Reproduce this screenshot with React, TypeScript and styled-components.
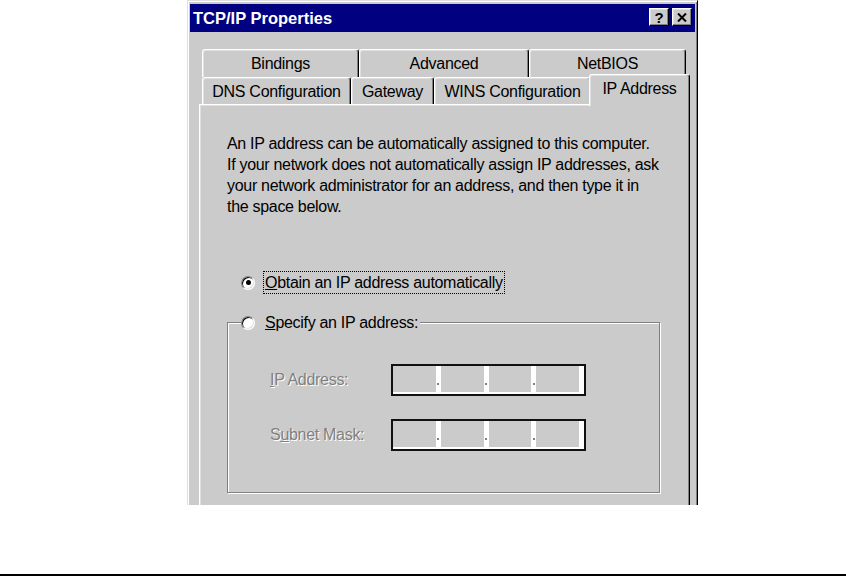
import styled, { createGlobalStyle } from 'styled-components'

const FACE = '#cbcbcb'

const GlobalStyle = createGlobalStyle`
  html, body {
    margin: 0;
    padding: 0;
    background: #fff;
  }
  body {
    font-family: "Liberation Sans", Arial, sans-serif;
    font-size: 16px;
    letter-spacing: -0.3px;
    color: #000;
  }
`

function IpBox() {
	return (
		<IpInput>
			<Octet />
			<Sep>
				<Dot />
			</Sep>
			<Octet />
			<Sep>
				<Dot />
			</Sep>
			<Octet />
			<Sep>
				<Dot />
			</Sep>
			<Octet />
		</IpInput>
	)
}

function App() {
	return (
		<>
			<GlobalStyle />
			<Page>
				<Dialog>
					<TitleBar>
						<Title>TCP/IP Properties</Title>
						<Caption>
							<CapButton>?</CapButton>
							<CapButton>
								<svg width="10" height="9" viewBox="0 0 10 9">
									<path d="M1 0.5 L9 8.5 M9 0.5 L1 8.5" stroke="#000" strokeWidth="2" />
								</svg>
							</CapButton>
						</Caption>
					</TitleBar>

					<Body>
						<TabRow>
							<Tab $w={157}>Bindings</Tab>
							<Tab $w={170}>Advanced</Tab>
							<Tab $w={157}>NetBIOS</Tab>
						</TabRow>
						<FrontRow>
							<Tab $w={149}>DNS Configuration</Tab>
							<Tab $w={83}>Gateway</Tab>
							<Tab $w={157}>WINS Configuration</Tab>
							<ActiveTab>IP Address</ActiveTab>
						</FrontRow>

						<Panel>
							<Intro>
								An IP address can be automatically assigned to this computer.
								<br />
								If your network does not automatically assign IP addresses, ask
								<br />
								your network administrator for an address, and then type it in
								<br />
								the space below.
							</Intro>

							<Option>
								<Radio $checked />
								<FocusLabel>
									<U>O</U>btain an IP address automatically
								</FocusLabel>
							</Option>

							<Group>
								<Legend>
									<Radio />
									<Label>
										<U>S</U>pecify an IP address:
									</Label>
								</Legend>
								<Fields>
									<FieldRow>
										<Disabled>
											<U>I</U>P Address:
										</Disabled>
										<IpBox />
									</FieldRow>
									<FieldRow>
										<Disabled>
											S<U>u</U>bnet Mask:
										</Disabled>
										<IpBox />
									</FieldRow>
								</Fields>
							</Group>
						</Panel>
					</Body>
				</Dialog>
				<Rule />
			</Page>
		</>
	)
}
export default App

const Page = styled.div`
	width: 846px;
	height: 576px;
	display: flex;
	flex-direction: column;
	overflow: hidden;
`

const Dialog = styled.div`
	margin-left: 187px;
	width: 511px;
	height: 505px;
	box-sizing: border-box;
	background: ${FACE};
	border: 1px solid;
	border-color: #dfdfdf #000 transparent #dfdfdf;
	border-bottom: none;
	box-shadow: inset 1px 1px 0 #fff, inset -1px 0 0 #808080;
	padding: 3px 2px 0 2px;
	display: flex;
	flex-direction: column;
	overflow: hidden;
`

const TitleBar = styled.div`
	height: 28px;
	flex-shrink: 0;
	background: #000080;
	display: flex;
	align-items: center;
	justify-content: space-between;
	padding: 0 3px 0 3px;
`

const Title = styled.div`
	color: #fff;
	font-weight: bold;
	font-size: 16.5px;
	letter-spacing: 0;
`

const Caption = styled.div`
	display: flex;
	gap: 3px;
	margin-top: -2px;
`

const CapButton = styled.div`
	width: 20px;
	height: 18px;
	box-sizing: border-box;
	background: ${FACE};
	border: 1px solid;
	border-color: #fff #000 #000 #fff;
	box-shadow: inset -1px -1px 0 #808080, inset 1px 1px 0 #dfdfdf;
	display: flex;
	align-items: center;
	justify-content: center;
	font-weight: bold;
	font-size: 15px;
	letter-spacing: 0;
	line-height: 1;
`

const Body = styled.div`
	flex: 1;
	display: flex;
	flex-direction: column;
	padding: 17px 5px 0 9px;
`

const TabRow = styled.div`
	display: flex;
	height: 28px;
	padding-left: 3px;
	flex-shrink: 0;
`

const FrontRow = styled(TabRow)`
	height: 27px;
	align-items: flex-end;
`

const Tab = styled.div<{ $w: number }>`
	width: ${({ $w }) => $w}px;
	height: 100%;
	box-sizing: border-box;
	background: ${FACE};
	border-top: 1px solid #fff;
	border-left: 1px solid #fff;
	border-right: 1px solid #000;
	border-radius: 3px 3px 0 0;
	box-shadow: inset -1px 0 0 #808080, inset 1px 1px 0 #dfdfdf;
	display: flex;
	align-items: center;
	justify-content: center;
	padding-top: 1px;
	white-space: nowrap;
`

const ActiveTab = styled(Tab).attrs({ $w: 101 })`
	position: relative;
	z-index: 1;
	height: 32px;
	margin: 0 0 -2px -2px;
	padding-bottom: 5px;
`

const Panel = styled.div`
	flex: 1;
	box-sizing: border-box;
	border-top: 1px solid #fff;
	border-left: 1px solid #fff;
	border-right: 1px solid #000;
	box-shadow: inset 1px 1px 0 #dfdfdf, inset -1px 0 0 #808080;
	padding: 28px 0 0 27px;
`

const Intro = styled.p`
	margin: 0;
	line-height: 21px;
`

const Option = styled.div`
	display: flex;
	align-items: center;
	height: 23px;
	margin-top: 54px;
	padding-left: 14px;
`

const Radio = styled.span<{ $checked?: boolean }>`
	width: 14px;
	height: 14px;
	flex-shrink: 0;
	box-sizing: border-box;
	border-radius: 50%;
	background: #fff;
	border: 1px solid;
	border-color: #808080 #fff #fff #808080;
	box-shadow: inset 1px 1px 0 #000, inset -1px -1px 0 #dfdfdf;
	display: flex;
	align-items: center;
	justify-content: center;
	margin-right: 8px;

	&::after {
		content: '';
		width: 5px;
		height: 5px;
		border-radius: 50%;
		background: ${({ $checked }) => ($checked ? '#000' : 'transparent')};
	}
`

const FocusLabel = styled.span`
	border: 1px dotted #000;
	padding: 0 1px;
	line-height: 21px;
	white-space: nowrap;
`

const Label = styled.span`
	line-height: 23px;
	padding-left: 2px;
	white-space: nowrap;
`

const U = styled.span`
	text-decoration: underline;
`

const Group = styled.div`
	width: 433px;
	box-sizing: border-box;
	margin-top: 28px;
	border: 1px solid #808080;
	box-shadow: inset 1px 1px 0 #fff, 1px 1px 0 #fff;
	padding: 0 0 41px 42px;
`

const Legend = styled.div`
	display: flex;
	align-items: center;
	width: fit-content;
	height: 23px;
	margin: -12px 0 0 -29px;
	padding-right: 2px;
	background: ${FACE};
`

const Fields = styled.div`
	display: flex;
	flex-direction: column;
	gap: 23px;
	margin-top: 30px;
`

const FieldRow = styled.div`
	display: flex;
	align-items: center;
	height: 32px;
`

const Disabled = styled.span`
	width: 121px;
	color: #808080;
	text-shadow: 1px 1px 0 #fff;
	white-space: nowrap;
`

const IpInput = styled.div`
	width: 195px;
	height: 32px;
	box-sizing: border-box;
	border: 2px solid #111;
	background: #fff;
	display: flex;
	padding: 0 5px 2px 0;
`

const Octet = styled.div`
	flex: 1;
	background: ${FACE};
`

const Sep = styled.div`
	width: 5px;
	display: flex;
	justify-content: center;
	align-items: center;
`

const Dot = styled.div`
	width: 2px;
	height: 2px;
	margin-top: 10px;
	background: #808080;
`

const Rule = styled.div`
	margin-top: 69px;
	height: 2px;
	background: #000;
	flex-shrink: 0;
`
